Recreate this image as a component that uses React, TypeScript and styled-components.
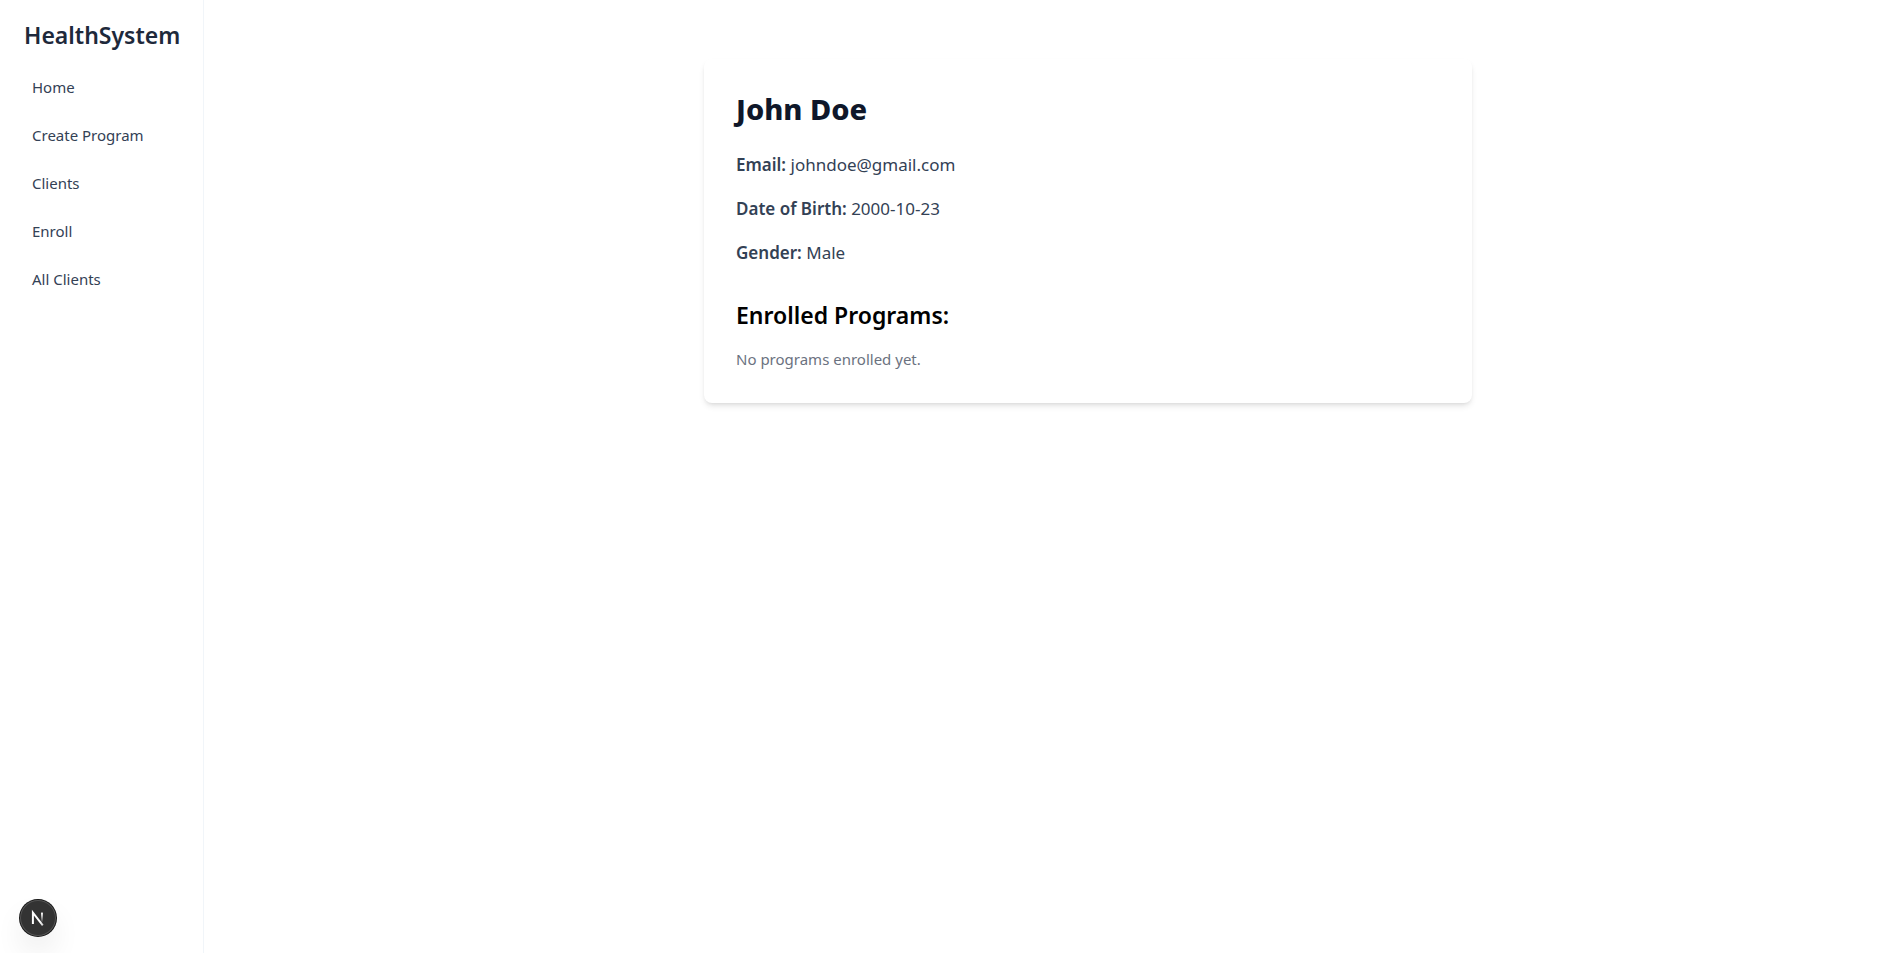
import React from 'react';
import styled, { createGlobalStyle } from 'styled-components';

const GlobalStyle = createGlobalStyle`
  *, *::before, *::after { box-sizing: border-box; }
  body {
    margin: 0;
    background: #ffffff;
    color: #000000;
    font-family: 'Noto Sans', 'Open Sans', sans-serif;
    font-size: 15px;
    line-height: 24px;
  }
  h1, h2, p, ul { margin: 0; padding: 0; }
`;

const Shell = styled.div`
  display: flex;
  min-height: 100vh;
`;

const Sidebar = styled.aside`
  flex: none;
  width: 204px;
  padding: 19px 16px;
  border-right: 1px solid #f1f5f9;
`;

const Brand = styled.p`
  padding: 0 8px;
  margin-bottom: 16px;
  color: #1e293b;
  font-size: 23px;
  font-weight: 600;
  line-height: 32px;
`;

const NavList = styled.ul`
  display: flex;
  flex-direction: column;
  gap: 8px;
  list-style: none;
`;

const NavLink = styled.a`
  display: block;
  padding: 8px 16px;
  border-radius: 6px;
  color: #334155;
  text-decoration: none;

  &:hover { background: #f1f5f9; }
`;

const Main = styled.main`
  flex: 1;
  min-width: 0;
  padding: 59px 0 40px 69px;
`;

const Card = styled.section`
  max-width: 768px;
  margin: 0 auto;
  padding: 32px;
  border-radius: 8px;
  background: #ffffff;
  box-shadow: 0 4px 6px -1px rgba(0, 0, 0, 0.1), 0 2px 4px -2px rgba(0, 0, 0, 0.1);
`;

const ClientName = styled.h1`
  margin-bottom: 24px;
  color: #0f172a;
  font-size: 29px;
  font-weight: 800;
  line-height: 36px;
`;

const Details = styled.div`
  display: flex;
  flex-direction: column;
  gap: 16px;
  color: #334155;
  font-size: 17px;
  line-height: 28px;
`;

const Label = styled.strong`
  font-weight: 600;
`;

const SectionTitle = styled.h2`
  margin: 32px 0 16px;
  font-size: 23px;
  font-weight: 600;
  line-height: 32px;
`;

const EmptyNote = styled.p`
  color: #6b7280;
`;

const DevButton = styled.button`
  position: fixed;
  left: 20px;
  bottom: 17px;
  display: flex;
  width: 36px;
  height: 36px;
  padding: 0;
  border: 0;
  border-radius: 50%;
  background: #333333;
  box-shadow: 0 0 0 1px #171717, inset 0 0 0 1px rgba(255, 255, 255, 0.16),
    0 16px 32px -8px rgba(0, 0, 0, 0.24);
  cursor: pointer;
`;

const links = ['Home', 'Create Program', 'Clients', 'Enroll', 'All Clients'];

const details = [
  { label: 'Email:', value: 'johndoe@gmail.com' },
  { label: 'Date of Birth:', value: '2000-10-23' },
  { label: 'Gender:', value: 'Male' },
];

function NextMark() {
  return (
    <svg width="36" height="36" viewBox="0 0 40 40" fill="none" aria-hidden="true">
      <defs>
        <linearGradient id="diagonal" x1="9.95" y1="11.13" x2="15.4" y2="17.9" gradientUnits="userSpaceOnUse">
          <stop stopColor="#fff" />
          <stop offset="0.6" stopColor="#fff" stopOpacity="0.77" />
          <stop offset="1" stopColor="#fff" stopOpacity="0" />
        </linearGradient>
        <linearGradient id="stem" x1="11.8" y1="1.4" x2="11.8" y2="12" gradientUnits="userSpaceOnUse">
          <stop stopColor="#fff" />
          <stop offset="1" stopColor="#fff" stopOpacity="0" />
        </linearGradient>
      </defs>
      <g transform="translate(12 13)">
        <path d="M13.3 15.2 2.34 1v12.6" stroke="url(#diagonal)" strokeWidth="2.2" />
        <path d="M12.4 1v12" stroke="url(#stem)" strokeWidth="2.2" />
      </g>
    </svg>
  );
}

export default function App() {
  return (
    <>
      <GlobalStyle />
      <Shell>
        <Sidebar>
          <Brand>HealthSystem</Brand>
          <nav>
            <NavList>
              {links.map((name) => (
                <li key={name}>
                  <NavLink href="#">{name}</NavLink>
                </li>
              ))}
            </NavList>
          </nav>
        </Sidebar>
        <Main>
          <Card>
            <ClientName>John Doe</ClientName>
            <Details>
              {details.map(({ label, value }) => (
                <p key={label}>
                  <Label>{label}</Label> {value}
                </p>
              ))}
            </Details>
            <SectionTitle>Enrolled Programs:</SectionTitle>
            <EmptyNote>No programs enrolled yet.</EmptyNote>
          </Card>
        </Main>
      </Shell>
      <DevButton type="button" aria-label="Open developer tools">
        <NextMark />
      </DevButton>
    </>
  );
}
